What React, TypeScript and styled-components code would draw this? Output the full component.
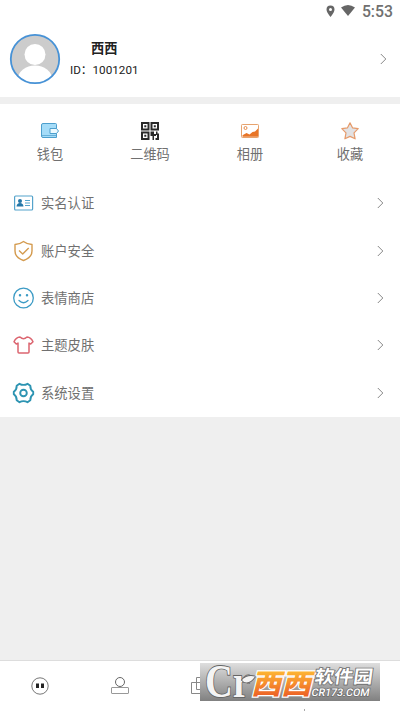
import React from "react";
import styled, { createGlobalStyle } from "styled-components";

const Global = createGlobalStyle`
  *{box-sizing:border-box}
  body{margin:0;background:#fff;font-family:Roboto,"Noto Sans CJK SC",sans-serif;overflow:hidden}
  svg{display:block;flex:none;overflow:visible}
`;
const Screen = styled.div`width:400px;height:711px;display:flex;flex-direction:column;background:#efefef;`;
const StatusBar = styled.div`
  height:20px;background:#fff;display:flex;align-items:center;justify-content:flex-end;padding:2px 7px 0 0;
  font:500 15.8px/20px Roboto,sans-serif;color:#707070;
  svg{margin-right:6px} span{margin:1px 0 0 1px}
`;
const Profile = styled.div`height:77px;background:#fff;display:flex;align-items:center;padding:0 13px 0 9px;`;
const Who = styled.div`flex:1;padding:1px 0 0 9px;color:#222;`;
const Name = styled.div`font-size:13.2px;font-weight:700;line-height:20px;padding-left:21px;margin-bottom:2px;`;
const Ident = styled.div`font-size:11.7px;line-height:18px;`;
const Panel = styled.div`margin-top:7px;height:312.5px;background:#fff;`;
const Shortcuts = styled.div`height:75.5px;display:grid;grid-template-columns:repeat(4,1fr);`;
const Shortcut = styled.div`
  display:flex;flex-direction:column;align-items:center;padding-top:17px;
  font-size:13.2px;line-height:20px;color:#707070;
  span{margin-top:4px}
`;
const Row = styled.div`
  height:47.4px;display:flex;align-items:center;padding:0 16px 0 13px;font-size:13.3px;color:#707070;
  span{flex:1;margin:-1px 0 0 7px}
`;
const Nav = styled.div`
  margin-top:auto;height:51px;background:#fff;border-top:1px solid #ddd;position:relative;
  display:grid;grid-template-columns:repeat(5,80px);justify-items:center;padding-top:15px;
`;
const Brand = styled.div`position:absolute;left:200px;top:2px;width:180px;height:38px;`;
const Speck = styled.i`position:absolute;left:304px;top:48px;width:1px;height:2px;background:#aaa;`;

const Chevron = () => (
  <svg width="7" height="12" viewBox="0 0 7 12" fill="none" stroke="#888" strokeWidth="1"><path d="M.8 1l5 5-5 5" /></svg>
);
const Avatar = () => (
  <svg width="52" height="52" viewBox="0 0 52 52">
    <defs><clipPath id="face"><circle cx="26" cy="26" r="24" /></clipPath></defs>
    <circle cx="26" cy="26" r="24" fill="#ccc" />
    <g clipPath="url(#face)" fill="#fff"><circle cx="26" cy="21.5" r="10.5" /><ellipse cx="26" cy="46" rx="17" ry="13.5" /></g>
    <circle cx="26" cy="26" r="24.2" fill="none" stroke="#4792d6" strokeWidth="1.8" />
  </svg>
);
const Wallet = () => (
  <svg width="20" height="20" viewBox="0 0 20 20" stroke="#4d9fcd" fill="#a5dcf8">
    <path d="M3 2.500h12.500q1 0 1 1v13H3q-1.500 0-1.500-1.500V4Q1.500 2.500 3 2.500z" />
    <path d="M2 14.500h14" fill="none" strokeWidth=".7" />
    <path d="M10 7.500h6.500l2 2.500-2 2.500H10z" fill="#edfaff" />
  </svg>
);
const Qr = () => (
  <svg width="20" height="20" viewBox="0 0 20 20" fill="#2a2a2a">
    <path fillRule="evenodd" d="M1 1h8.500v8.500H1zM3 3v4.500h4.500V3zM10.500 1H19v8.500h-8.500zM12.500 3v4.500H17V3zM1 10.500h8.500V19H1zM3 12.500V17h4.500v-4.500z" />
    <path d="M4.300 4.300h2v2h-2zM13.800 4.300h2v2h-2zM4.300 13.800h2v2h-2zM10.500 10.500H14v2.500h2v2h-2v4h-1.500v-4h-2zM16 10.500h1.500v2H19v4.500h-2v-3h-1zM15.500 17H19v2h-3.500z" />
  </svg>
);
const Photo = () => (
  <svg width="20" height="20" viewBox="0 0 20 20">
    <rect x="1.500" y="3.500" width="17" height="13" rx=".8" fill="#fff" stroke="#e7a36e" />
    <path d="M2.500 15.800v-1.500l4-2.300 3 1.500 3-2.500 2.500-.5 3-3v8.300z" fill="#e87527" />
    <circle cx="5.500" cy="7" r="1.500" fill="none" stroke="#e58b4c" />
  </svg>
);
const Star = () => (
  <svg width="20" height="20" viewBox="0 0 20 20" fill="#e2e2e4" stroke="#e69b6b" strokeWidth="1.200" strokeLinejoin="round">
    <path d="M10 1.800l2.500 5 5.700.8-4.200 4.200 1.100 6-5.100-2.400-5.100 2.400 1.100-6-4.200-4.200 5.700-.8z" />
  </svg>
);
const Card = () => (
  <svg width="21" height="22" viewBox="0 0 21 22" fill="none" stroke="#55a3cb" strokeWidth="1.200">
    <rect x="1.600" y="4" width="18" height="14" rx="1" />
    <circle cx="7" cy="9" r="2" fill="#2477a8" stroke="none" /><path d="M3.500 14.500q.3-3.500 3.500-3.500t3.500 3.500z" fill="#2477a8" stroke="none" />
    <path d="M12 8.500h5M12 11h5M12 13.500h5" />
  </svg>
);
const Shield = () => (
  <svg width="21" height="22" viewBox="0 0 21 22" fill="none" stroke="#d49b4f" strokeWidth="1.400" strokeLinejoin="round">
    <path d="M10.500 1.500Q14 4.300 19 4.500V11q0 6.500-8.500 9.500Q2 17.500 2 11V4.500q5-.2 8.500-3z" /><path d="M6 10.500l3.700 3.500 6-6" />
  </svg>
);
const Smile = () => (
  <svg width="21" height="22" viewBox="0 0 21 22" fill="none" stroke="#3c9bc5" strokeWidth="1.300" strokeLinecap="round">
    <circle cx="10.500" cy="11" r="9.800" /><path d="M6 13.500q4.500 4.500 9 0" />
    <circle cx="7" cy="8.300" r=".6" fill="#287799" /><circle cx="14" cy="8.300" r=".6" fill="#287799" />
  </svg>
);
const Shirt = () => (
  <svg width="21" height="22" viewBox="0 0 21 22" fill="none" stroke="#dc6570" strokeWidth="1.500" strokeLinejoin="round">
    <path d="M7 3q3.500 3.400 7 0 4 .3 6 4.700l-2.300 2.400-1.700-1V18q0 1-1 1H6q-1 0-1-1V9.100l-1.700 1L1 7.700Q3 3.300 7 3z" />
  </svg>
);
const Gear = () => (
  <svg width="21" height="22" viewBox="0 0 21 22" fill="none" stroke="#2d94b2" strokeWidth="1.900" strokeLinejoin="round">
    <path d="M6.500 1.800Q10.500 4 14.500 1.800l2.800 2q-.1 4 2.900 6v2.400q-3 2-2.900 6l-2.800 2q-4-2.200-8 0l-2.800-2q.1-4-2.900-6V9.800q3-2 2.900-6z" />
    <circle cx="10.500" cy="11" r="3.300" />
  </svg>
);
const Pin = () => (
  <svg width="9" height="13" viewBox="0 0 9 13"><path fill="#666" fillRule="evenodd" d="M4.500.5Q8.500.5 8.500 4.500q0 2.500-4 7.500-4-5-4-7.500 0-4 4-4zM4.500 3a1.500 1.500 0 100 3 1.500 1.500 0 000-3z" /></svg>
);
const Wifi = () => (
  <svg width="14" height="12" viewBox="0 0 14 12"><path fill="#666" d="M0 2.500q7-5 14 0L7 11z" /></svg>
);
const ChatTab = () => (
  <svg width="20" height="20" viewBox="0 0 20 20"><circle cx="10" cy="10" r="8.200" fill="none" stroke="#777" /><path fill="#222" d="M6 7.500h3v4.500H6zM11 7.500h3v4.500h-3z" /></svg>
);
const PersonTab = () => (
  <svg width="20" height="20" viewBox="0 0 20 20" fill="none" stroke="#999"><circle cx="10" cy="6" r="4.500" stroke="#666" /><rect x="1.500" y="11.500" width="17" height="6" rx=".5" /></svg>
);
const SquaresTab = () => (
  <svg width="20" height="20" viewBox="0 0 20 20" fill="none" stroke="#888"><path d="M1.500 6.500h12v11h-12zM6.500 1.500h12v12h-12z" /></svg>
);
const Watermark = () => (
  <svg width="180" height="38" viewBox="0 0 180 38">
    <defs>
      <linearGradient id="plate" x2="0" y2="1"><stop stopColor="#dedede" /><stop offset="1" stopColor="#808080" /></linearGradient>
      <linearGradient id="fire" x2="0" y2="1"><stop offset=".2" stopColor="#ffbd35" /><stop offset="1" stopColor="#e94f24" /></linearGradient>
    </defs>
    <rect width="180" height="38" fill="url(#plate)" />
    <g fill="#f4f4f4" stroke="#666" strokeWidth="1.800" paintOrder="stroke" fontFamily="Liberation Serif,serif">
      <text x="5" y="34" fontSize="47" fontWeight="700" textLength="45" lengthAdjust="spacingAndGlyphs">Cr</text>
      <path d="M42 17q5-5.500 13-3.500-5 7.500-11 5.500z" />
    </g>
    <g fontFamily="Noto Sans CJK SC,sans-serif" fontWeight="900">
      <text transform="translate(51 30.500) skewX(-14)" fontSize="28" textLength="60" lengthAdjust="spacingAndGlyphs" fill="url(#fire)" stroke="#fff" strokeWidth="2.400" paintOrder="stroke">西西</text>
      <g fill="#fff" stroke="#707070" strokeWidth="1.600" paintOrder="stroke">
        <text transform="translate(114 20) skewX(-8)" fontSize="18" fontWeight="700" textLength="58" lengthAdjust="spacingAndGlyphs">软件园</text>
        <text transform="translate(111 32.500) skewX(-10)" fontSize="10.500" fontFamily="Roboto,sans-serif" fontWeight="500" textLength="58" lengthAdjust="spacingAndGlyphs">CR173.COM</text>
      </g>
    </g>
  </svg>
);

const shortcuts = [["钱包", Wallet], ["二维码", Qr], ["相册", Photo], ["收藏", Star]] as const;
const rows = [["实名认证", Card], ["账户安全", Shield], ["表情商店", Smile], ["主题皮肤", Shirt], ["系统设置", Gear]] as const;

export default function App() {
  return (
    <Screen>
      <Global />
      <StatusBar><Pin /><Wifi /><span>5:53</span></StatusBar>
      <Profile>
        <Avatar />
        <Who><Name>西西</Name><Ident>ID：1001201</Ident></Who>
        <Chevron />
      </Profile>
      <Panel>
        <Shortcuts>{shortcuts.map(([label, Icon]) => <Shortcut key={label}><Icon /><span>{label}</span></Shortcut>)}</Shortcuts>
        {rows.map(([label, Icon]) => <Row key={label}><Icon /><span>{label}</span><Chevron /></Row>)}
      </Panel>
      <Nav>
        <ChatTab /><PersonTab /><SquaresTab />
        <Brand><Watermark /></Brand>
        <Speck />
      </Nav>
    </Screen>
  );
}
